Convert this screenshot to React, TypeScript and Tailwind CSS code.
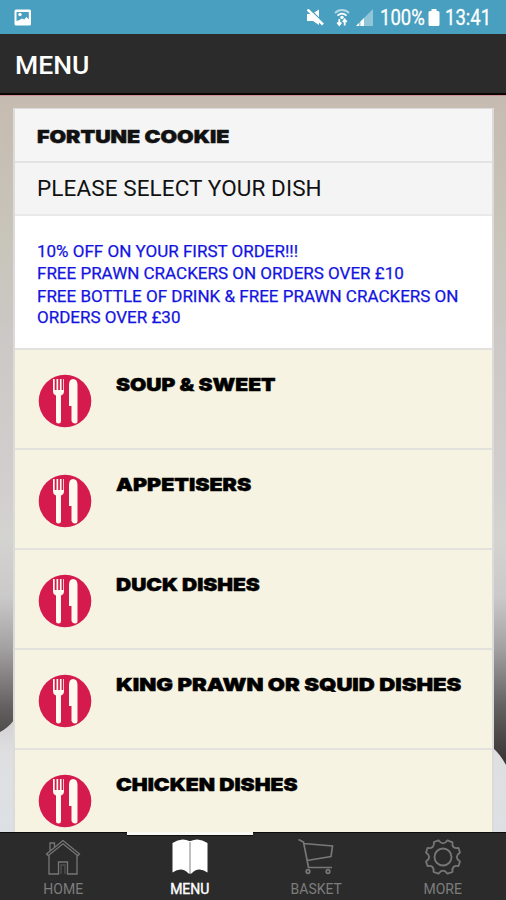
import clsx from "clsx";

interface Dish {
	name: string;
	stretch: string;
}

const dishes: Dish[] = [
	{ name: "SOUP & SWEET", stretch: "scale-x-[1.17]" },
	{ name: "APPETISERS", stretch: "scale-x-[1.19]" },
	{ name: "DUCK DISHES", stretch: "scale-x-[1.165]" },
	{ name: "KING PRAWN OR SQUID DISHES", stretch: "scale-x-[1.23]" },
	{ name: "CHICKEN DISHES", stretch: "scale-x-[1.175]" },
];

const displayFont =
	"origin-left font-['Inter',sans-serif] font-black text-[18px] leading-[20px] whitespace-nowrap [-webkit-text-stroke:0.5px_currentColor]";

function StatusBar() {
	return (
		<div className="flex h-[34px] shrink-0 items-center bg-[#489fbf] pl-[14px] pr-[15px] pt-[2px] text-white">
			<svg width="18" height="18" viewBox="0 0 18 18">
				<rect x="0.5" y="0.5" width="16.5" height="16" rx="1.5" fill="#fff" />
				<path d="M2.500 3h12.300v7.300l-2.500-2.300-2 2.500-2.500-1-2.300 1.500-3 1z" fill="#489fbf" />
				<circle cx="6" cy="5.500" r="1.700" fill="#fff" />
			</svg>
			<div className="flex-1" />
			<svg width="17" height="18" viewBox="0 0 17 18" fill="#fff">
				<path d="M0 5h5l7-4.500V16l-6-4H0z" />
				<path d="M2.500 0l14 13.500" stroke="#489fbf" strokeWidth="1.500" />
				<path d="M0.500 0.500l15.500 15" stroke="#fff" strokeWidth="2.600" />
			</svg>
			<svg className="ml-[10px]" width="16" height="18" viewBox="0 0 16 18" fill="none" stroke="#fff">
				<path d="M1 4c4-4 10-4 14 0" opacity=".6" strokeWidth="1.800" />
				<path d="M3.500 6.700c3-2.700 6-2.700 9 0" strokeWidth="1.800" />
				<circle cx="8" cy="8.500" r="1.800" fill="#fff" stroke="none" />
				<path d="M5.300 10v6M3.200 13.500l2.100 2.500 2-2.500M10.700 16.500v-6M8.800 13l1.900-2.500 2 2.500" strokeWidth="1.800" />
			</svg>
			<svg className="ml-[6px]" width="18" height="18" viewBox="0 0 18 18" fill="#fff">
				<path d="M0 17L17 0v17z" opacity=".4" />
				<path d="M0 17h3v-3zM4.500 17H8V9l-3.500 3.500z" />
			</svg>
			<span className="ml-[6px] inline-block w-[45px] origin-left scale-x-[0.84] whitespace-nowrap text-[22px] leading-[34px] [-webkit-text-stroke:0.3px_white]">
				100%
			</span>
			<svg className="ml-[3px]" width="12" height="18" viewBox="0 0 12 18">
				<path d="M3.500 0h5v2H10a1.500 1.500 0 0 1 1.500 1.500v12A1.500 1.500 0 0 1 10 17H2A1.500 1.500 0 0 1 .5 15.500v-12A1.500 1.500 0 0 1 2 2h1.500z" fill="#fff" />
			</svg>
			<span className="ml-[5px] inline-block w-[46px] origin-left scale-x-[0.84] whitespace-nowrap text-[22px] leading-[34px] [-webkit-text-stroke:0.3px_white]">
				13:41
			</span>
		</div>
	);
}

function Backdrop() {
	return (
		<svg
			className="absolute inset-0 h-full w-full"
			viewBox="0 96 506 736"
			preserveAspectRatio="none"
		>
			<defs>
				<linearGradient id="wall" x1="0" y1="96" x2="0" y2="832" gradientUnits="userSpaceOnUse">
					<stop offset="0" stopColor="#c6bbb0" />
					<stop offset="0.2" stopColor="#c8c5bb" />
					<stop offset="0.32" stopColor="#cbc8c5" />
					<stop offset="0.5" stopColor="#d0cdcc" />
					<stop offset="0.6" stopColor="#d3d3d0" />
					<stop offset="0.68" stopColor="#cbcaca" />
					<stop offset="0.75" stopColor="#a3a1a1" />
					<stop offset="0.83" stopColor="#626060" />
					<stop offset="0.9" stopColor="#3d3737" />
				</linearGradient>
				<linearGradient id="plate" x1="0" y1="720" x2="0" y2="832" gradientUnits="userSpaceOnUse">
					<stop offset="0" stopColor="#d2d1d3" />
					<stop offset="0.3" stopColor="#dfdfe1" />
					<stop offset="1" stopColor="#dce0e4" />
				</linearGradient>
			</defs>
			<rect y="96" width="506" height="736" fill="url(#wall)" />
			<path d="M0 732Q8 728 14 720V832H0z" fill="url(#plate)" />
			<path d="M493 748Q500 754 506 765V832H493z" fill="url(#plate)" />
		</svg>
	);
}

function CutleryIcon() {
	return (
		<svg className="shrink-0" width="54" height="54" viewBox="0 0 54 54">
			<circle cx="27" cy="27" r="26.300" fill="#d51b4d" />
			<g fill="#fffaf0">
				<path d="M15 5h1.700v11h1.800V5h1.700v11h1.700V5h1.700v11h1.600V5H26v12q0 3.500-3 4.500V47q0 2.500-2.500 2.500T18 47V21.500q-3-1-3-4.500z" />
				<path d="M31 32V11q0-6 4-6 4.500 0 4.500 6v36q0 2.500-2.500 2.500T33.500 47V32z" />
			</g>
		</svg>
	);
}

function DishRow({ dish }: { dish: Dish }) {
	return (
		<li className="flex h-[100px] shrink-0 border-t-2 border-[#e2e1de] bg-[#f7f3e2] pl-[23px] pt-[24px]">
			<CutleryIcon />
			<h3 className={clsx("ml-[24px] mt-[1px] self-start text-black", displayFont, dish.stretch)}>
				{dish.name}
			</h3>
		</li>
	);
}

function HomeIcon() {
	return (
		<svg width="38" height="38" viewBox="0 0 38 38" fill="none" stroke="#777" strokeWidth="1.300">
			<path d="M2.500 15L19 1.500 35.500 15l-1.700 1.700L19 4.800 4.200 16.700zM6 12V4h4.500v4.300M5 16V35h9.500V23h9v12H33V16" />
			<path d="M17 35v-9h4v9" opacity=".5" />
		</svg>
	);
}

function BookIcon() {
	return (
		<svg width="38" height="38" viewBox="0 0 38 38">
			<path
				d="M1.500 4Q10-2 18.500 2h1Q28-2 36.500 4V33.500Q27 27 20.500 34.500h-3Q11 27 1.500 33.500z"
				fill="#fff"
			/>
			<path d="M19 3v31" stroke="#aaa" strokeWidth="1.500" />
		</svg>
	);
}

function BasketIcon() {
	return (
		<svg width="38" height="38" viewBox="0 0 38 38" fill="none" stroke="#777" strokeWidth="1.700">
			<path d="M1.500 0.500l5 2.500L11.500 28.500h23.500M6.500 4.500L35.500 7 34 17.500 10 21.500" />
			<circle cx="11" cy="32.500" r="1.800" />
			<circle cx="31" cy="32.500" r="1.800" />
		</svg>
	);
}

function GearIcon() {
	return (
		<svg width="38" height="38" viewBox="0 0 38 38" fill="none" stroke="#777" strokeWidth="1.800" strokeLinejoin="round">
			<circle cx="19" cy="18" r="8.500" />
			<path d="M10 3L14.500 1.300Q19 7.500 23.500 1.300L28.500 3.300Q27.500 10 34.500 9L36 13.500Q29.500 18 36 22.500L34.500 27Q27.500 26 28.500 33L23.500 34.700Q19 28.500 14.500 34.700L9.500 33Q10.500 26 3.500 27L2 22.500Q8.500 18 2 13.500L3.500 9Q10.500 10 10 3z" />
		</svg>
	);
}

const tabs = [
	{ label: "HOME", Icon: HomeIcon, active: false },
	{ label: "MENU", Icon: BookIcon, active: true },
	{ label: "BASKET", Icon: BasketIcon, active: false },
	{ label: "MORE", Icon: GearIcon, active: false },
];

function TabBar() {
	return (
		<nav className="grid h-[68px] shrink-0 grid-cols-4 bg-[#2b2b2b]">
			{tabs.map(({ label, Icon, active }) => (
				<div
					key={label}
					className={clsx(
						"flex flex-col items-center",
						active
							? "border-t-[3px] border-[#f8f8f4] text-white shadow-[inset_0_1px_0_#111] [-webkit-text-stroke:0.4px_white]"
							: "border-t border-[#0c0c0c] pt-[2px] text-[#7d7d7d]",
					)}
				>
					<div className="mt-[4px] h-[38px]">
						<Icon />
					</div>
					<span className="mt-[3px] font-['Roboto',sans-serif] text-[14px] leading-[18px]">
						{label}
					</span>
				</div>
			))}
		</nav>
	);
}

export default function App() {
	return (
		<div className="flex h-[900px] w-[506px] flex-col overflow-hidden bg-[#2b2b2b] font-['Roboto',sans-serif]">
			<StatusBar />
			<header className="flex h-[61px] shrink-0 items-center border-b-2 border-[#0d0505] bg-[#2b2b2b] pl-[15px] pt-[2px]">
				<h1 className="text-[26.500px] font-medium leading-[30px] text-white">MENU</h1>
			</header>
			<main className="relative h-[737px] overflow-hidden border-t border-[#c98f93] pl-[13px] pr-[12px] pt-[12px]">
				<Backdrop />
				<div className="relative flex flex-col border-x-2 border-t border-[#dcdbd9]">
					<div className="h-[54px] border-b-2 border-[#e2e2e2] bg-[#f5f5f5] pl-[22px] pt-[17px] text-[#111]">
						<h2 className={clsx("inline-block scale-x-[1.19]", displayFont)}>
							FORTUNE COOKIE
						</h2>
					</div>
					<p className="h-[53px] border-b-2 border-[#e9e9e9] bg-[#f4f4f4] pl-[22px] pt-[11px] text-[22.500px] leading-[28px] tracking-[0.1px] text-[#111]">
						PLEASE SELECT YOUR DISH
					</p>
					<div className="h-[132px] whitespace-nowrap bg-white pl-[22px] pt-[24px] text-[17px] text-[#1414e0] [-webkit-text-stroke:0.25px_#1414e0]">
						<p className="leading-[22px]">10% OFF ON YOUR FIRST ORDER!!!</p>
						<p className="leading-[23px]">FREE PRAWN CRACKERS ON ORDERS OVER £10</p>
						<p className="leading-[23px]">FREE BOTTLE OF DRINK &amp; FREE PRAWN CRACKERS ON</p>
						<p className="leading-[18px]">ORDERS OVER £30</p>
					</div>
					<ul>
						{dishes.map((dish) => (
							<DishRow key={dish.name} dish={dish} />
						))}
					</ul>
				</div>
			</main>
			<TabBar />
		</div>
	);
}
